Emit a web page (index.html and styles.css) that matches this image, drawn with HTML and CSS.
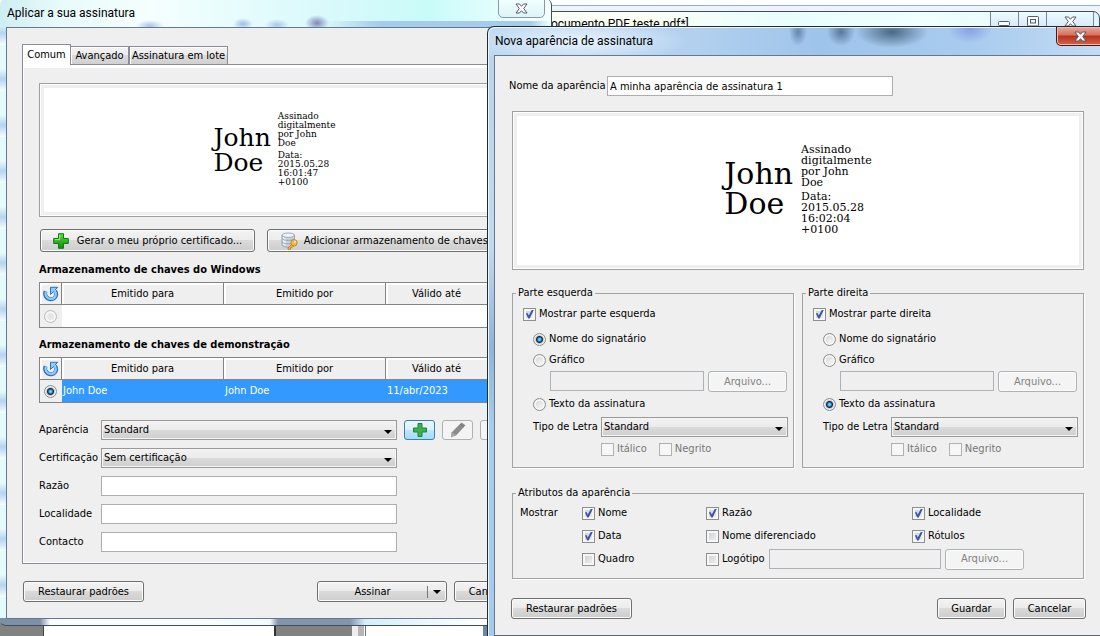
FILE: index.html
```html
<!DOCTYPE html>
<html lang="pt">
<head>
<meta charset="utf-8">
<title>Nova aparência de assinatura</title>
<link rel="stylesheet" href="styles.css">
</head>
<body>
<svg class="defs" aria-hidden="true">
  <defs>
    <linearGradient id="g-green" x1="0" y1="0" x2="0" y2="1"><stop offset="0" stop-color="#5fdc3a"/><stop offset="1" stop-color="#0c8a10"/></linearGradient>
  </defs>
  <symbol id="i-plus" viewBox="0 0 16 16"><path d="M5.5 .7h5v4.8h4.8v5h-4.8v4.8h-5v-4.8H.7v-5h4.8z" fill="url(#g-green)" stroke="#0b7d12" stroke-width="1"/><path d="M6.6 1.8v4.8H1.8" fill="none" stroke="#a5ef86" stroke-width=".9"/></symbol>
  <symbol id="i-plus-flat" viewBox="0 0 16 16"><path d="M6 1.500h4V6h4.500v4H10v4.500H6V10H1.500V6H6z" fill="#3cb24c" stroke="#23803a"/></symbol>
  <symbol id="i-refresh" viewBox="0 0 16 16"><path d="M2.600 5.200C1.200 8.500 3 12.800 7.200 13.200c5 .4 7.500-4.500 4.800-8.200" fill="none" stroke="#2b72c0" stroke-width="4"/><path d="M7.500 1.300h7.200L7.500 8.500z" fill="#8ecbf6" stroke="#2b72c0" stroke-linejoin="round"/><path d="M2.900 5.800C1.700 8.500 3.500 12.500 7.200 12.900c4.700.4 7-4 4.600-7.700L10.500 3.500" fill="none" stroke="#8ecbf6" stroke-width="2.200"/></symbol>
  <symbol id="i-store" viewBox="0 0 18 18"><path d="M2 3v9.500c0 1.700 2.800 2.700 6.200 2.700s6.300-1 6.300-2.700V3z" fill="#c8d3df" stroke="#8798ab" stroke-width=".8"/><path d="M3.500 5v8M5 5.500v8.300" stroke="#eef3f8" stroke-width="1.200"/><ellipse cx="8.250" cy="3.200" rx="6.200" ry="2.200" fill="#eff4f9" stroke="#8798ab" stroke-width=".8"/><path d="M2 6.500c1 2.500 11.500 2.500 12.500 0M2 10c1 2.500 11.500 2.500 12.500 0" fill="none" stroke="#8798ab" stroke-width=".8"/><path d="M11.900 12.100 8 16v1.300h2.500v-1.600h1.500l1.300-1.500z" fill="#f5b53c" stroke="#c07a14" stroke-width=".8"/><circle cx="14" cy="10.800" r="3.200" fill="#f7b944" stroke="#c07a14" stroke-width=".8"/><circle cx="15" cy="9.800" r="1" fill="#fff"/></symbol>
  <symbol id="i-pencil" viewBox="0 0 18 16"><path d="M12.500 .5 16.500 3.300 7.500 13 2 15.300l.8-5z" fill="#8b8b8b"/><path d="m2.800 10.300 4.700 2.700L2 15.300z" fill="#a5a5a5"/><path d="M11 2.200 15 5" stroke="#737373"/></symbol>
  <symbol id="i-close" viewBox="0 0 13 11"><path d="M1 1h3.500l2 2.300 2-2.300H12L8.700 5.500 12 10H8.500l-2-2.300-2 2.300H1l3.300-4.500z" fill="#fff" stroke="#555a6c" stroke-width="1"/></symbol>
</svg>

<div class="desktop">
  <section class="window app">
    <header class="app-title">
      <span class="app-name">Documento PDF teste.pdf*]</span>
      <div class="caption">
        <button type="button" class="cap" aria-label="Minimizar"><svg width="13" height="11" viewBox="0 0 13 11"><rect x=".5" y="5.500" width="11" height="4" rx="1" fill="#fff" stroke="#555a6c"/></svg></button>
        <button type="button" class="cap" aria-label="Maximizar"><svg width="12" height="11" viewBox="0 0 12 11"><rect x=".5" y=".5" width="11" height="9.500" rx="1" fill="#fff" stroke="#555a6c"/><rect x="3.500" y="3.500" width="5" height="3.500" fill="#dff" stroke="#555a6c"/></svg></button>
        <button type="button" class="cap cap-wide" aria-label="Fechar"><svg width="13" height="11"><use href="#i-close"/></svg></button>
      </div>
    </header>
    <div class="app-pages"></div>
  </section>

  <section class="window sign">
    <header class="sign-title">
      <h1 class="caption-text">Aplicar a sua assinatura</h1>
      <button type="button" class="sign-close" aria-label="Fechar"><svg width="13" height="11"><use href="#i-close"/></svg></button>
    </header>
    <div class="client sign-client">
      <div class="tabs" role="tablist">
        <button type="button" class="tab tab-on" role="tab" aria-selected="true">Comum</button>
        <button type="button" class="tab tab-mid" role="tab">Avançado</button>
        <button type="button" class="tab tab-last" role="tab">Assinatura em lote</button>
      </div>
      <div class="panel" role="tabpanel">
        <div class="preview preview-s">
          <p class="sig-name">John<br>Doe</p>
          <div class="sig-text"><p>Assinado<br>digitalmente<br>por John<br>Doe</p><p>Data:<br>2015.05.28<br>16:01:47<br>+0100</p></div>
        </div>
        <div class="cert-actions">
          <button type="button" class="btn btn-big btn-gen"><svg width="16" height="16"><use href="#i-plus"/></svg>Gerar o meu próprio certificado...</button>
          <button type="button" class="btn btn-big btn-store"><svg width="18" height="18"><use href="#i-store"/></svg>Adicionar armazenamento de chaves...</button>
        </div>
        <h2 class="store-title">Armazenamento de chaves do Windows</h2>
        <table class="keys">
          <colgroup><col class="c-pick"><col class="c-name"><col class="c-name"><col class="c-date"><col></colgroup>
          <thead><tr><th><svg width="16" height="16"><use href="#i-refresh"/></svg></th><th>Emitido para</th><th>Emitido por</th><th>Válido até</th><th></th></tr></thead>
          <tbody><tr><td class="pick"><input type="radio" name="cert-win" disabled aria-label="Certificado do Windows"></td><td></td><td></td><td></td><td></td></tr></tbody>
        </table>
        <h2 class="store-title">Armazenamento de chaves de demonstração</h2>
        <table class="keys">
          <colgroup><col class="c-pick"><col class="c-name"><col class="c-name"><col class="c-date"><col></colgroup>
          <thead><tr><th><svg width="16" height="16"><use href="#i-refresh"/></svg></th><th>Emitido para</th><th>Emitido por</th><th>Válido até</th><th></th></tr></thead>
          <tbody><tr class="chosen"><td class="pick"><input type="radio" name="cert-demo" checked aria-label="John Doe"></td><td>John Doe</td><td>John Doe</td><td>11/abr/2023</td><td></td></tr></tbody>
        </table>
        <div class="form">
          <label for="look">Aparência</label>
          <div class="look-row">
            <span class="pick-list"><select id="look"><option>Standard</option></select></span>
            <button type="button" class="icon-btn icon-btn-hot" aria-label="Adicionar"><svg width="16" height="16"><use href="#i-plus-flat"/></svg></button>
            <button type="button" class="icon-btn" aria-label="Editar" disabled><svg width="18" height="16"><use href="#i-pencil"/></svg></button>
            <button type="button" class="icon-btn" aria-label="Remover" disabled></button>
          </div>
          <label for="level">Certificação</label>
          <span class="pick-list"><select id="level"><option>Sem certificação</option></select></span>
          <label for="reason">Razão</label><input class="text" type="text" id="reason">
          <label for="place">Localidade</label><input class="text" type="text" id="place">
          <label for="contact">Contacto</label><input class="text" type="text" id="contact">
        </div>
      </div>
      <footer class="actions sign-actions">
        <button type="button" class="btn btn-reset">Restaurar padrões</button>
        <button type="button" class="btn btn-sign"><span>Assinar</span><i class="arrow"></i></button>
        <button type="button" class="btn btn-cancel">Cancelar</button>
      </footer>
    </div>
  </section>

  <section class="window look">
    <header class="look-title">
      <h1 class="caption-text">Nova aparência de assinatura</h1>
      <button type="button" class="look-close" aria-label="Fechar"><svg width="13" height="11"><use href="#i-close"/></svg></button>
    </header>
    <div class="client look-client">
      <div class="name-row">
        <label for="look-name">Nome da aparência</label>
        <input class="text" type="text" id="look-name" value="A minha aparência de assinatura 1">
      </div>
      <div class="preview preview-l">
        <p class="sig-name">John<br>Doe</p>
        <div class="sig-text"><p>Assinado<br>digitalmente<br>por John<br>Doe</p><p>Data:<br>2015.05.28<br>16:02:04<br>+0100</p></div>
      </div>
      <div class="halves">
        <fieldset class="group">
          <legend>Parte esquerda</legend>
          <div class="half">
            <label class="opt"><input type="checkbox" checked>Mostrar parte esquerda</label>
            <div class="half-body">
              <label class="opt"><input type="radio" name="left" checked>Nome do signatário</label>
              <label class="opt opt-file"><input type="radio" name="left">Gráfico</label>
              <div class="file-row"><input class="text" type="text" disabled aria-label="Gráfico"><button type="button" class="btn" disabled>Arquivo...</button></div>
              <label class="opt"><input type="radio" name="left">Texto da assinatura</label>
              <div class="font-row"><label for="font-l">Tipo de Letra</label><span class="pick-list"><select id="font-l"><option>Standard</option></select></span></div>
              <div class="style-row"><label class="opt off"><input type="checkbox" disabled>Itálico</label><label class="opt off"><input type="checkbox" disabled>Negrito</label></div>
            </div>
          </div>
        </fieldset>
        <fieldset class="group">
          <legend>Parte direita</legend>
          <div class="half">
            <label class="opt"><input type="checkbox" checked>Mostrar parte direita</label>
            <div class="half-body">
              <label class="opt"><input type="radio" name="right">Nome do signatário</label>
              <label class="opt opt-file"><input type="radio" name="right">Gráfico</label>
              <div class="file-row"><input class="text" type="text" disabled aria-label="Gráfico"><button type="button" class="btn" disabled>Arquivo...</button></div>
              <label class="opt"><input type="radio" name="right" checked>Texto da assinatura</label>
              <div class="font-row"><label for="font-r">Tipo de Letra</label><span class="pick-list"><select id="font-r"><option>Standard</option></select></span></div>
              <div class="style-row"><label class="opt off"><input type="checkbox" disabled>Itálico</label><label class="opt off"><input type="checkbox" disabled>Negrito</label></div>
            </div>
          </div>
        </fieldset>
      </div>
      <fieldset class="group attrs-group">
        <legend>Atributos da aparência</legend>
        <div class="attrs">
          <span class="attrs-label">Mostrar</span>
          <label class="opt"><input type="checkbox" checked>Nome</label>
          <label class="opt"><input type="checkbox" checked>Razão</label>
          <label class="opt"><input type="checkbox" checked>Localidade</label>
          <label class="opt"><input type="checkbox" checked>Data</label>
          <label class="opt"><input type="checkbox">Nome diferenciado</label>
          <label class="opt"><input type="checkbox" checked>Rótulos</label>
          <label class="opt"><input type="checkbox">Quadro</label>
          <div class="logo-row"><label class="opt"><input type="checkbox">Logótipo</label><input class="text" type="text" disabled aria-label="Logótipo"><button type="button" class="btn" disabled>Arquivo...</button></div>
        </div>
      </fieldset>
      <footer class="actions look-actions">
        <button type="button" class="btn btn-reset">Restaurar padrões</button>
        <button type="button" class="btn btn-save">Guardar</button>
        <button type="button" class="btn btn-cancel">Cancelar</button>
      </footer>
    </div>
  </section>
</div>
</body>
</html>
```
FILE: styles.css
```css
* { box-sizing: border-box; }
body { margin: 0; font: 11px/14px "DejaVu Sans Condensed", "DejaVu Sans", sans-serif; color: #000; }
h1, h2, p { margin: 0; font-weight: normal; }
button, input, select { font: inherit; color: inherit; margin: 0; padding: 0; }
button { display: flex; align-items: center; justify-content: center; white-space: nowrap; }
label, .opt { white-space: nowrap; }
.defs { position: absolute; width: 0; height: 0; }

.desktop { position: relative; min-height: 100vh; overflow: hidden; background: linear-gradient(#fdfeff 0 5px, #9aaac8 5px 6px, #edf3fb 6px); }
.window { position: absolute; display: flex; flex-direction: column; }

/* application behind the dialogs */
.app { top: 11px; left: 0; right: 0; bottom: 0; }
.app-title { display: flex; height: 30px; border: 1px solid #444c58; border-radius: 0 7px 0 0; background: linear-gradient(90deg, #f2fefe, #fbfff4 640px, #e9fdfd 780px, #f0ffff 930px, #dcf6fb); }
.app-name { font: 12px/25px Roboto, "Noto Sans", sans-serif; margin-left: 542px; }
.caption { display: flex; margin: 0 5px 0 auto; height: 20px; }
.cap { width: 28px; align-items: flex-start; padding-top: 4px; border: 0; border-left: 1px solid #7c8694; background: linear-gradient(#ecfbff, #cfe4f6); }
.cap-wide { width: 48px; border-right: 1px solid #7c8694; }
.app-pages { flex: 1; background: linear-gradient(90deg, #828282 0 43px, #444 43px 44px, #fff 44px 274px, #333 274px 276px, #828282 276px 352px, #eee 352px 358px, #b5b5b5 358px 364px, #fff 364px 365px, #53789a 365px 366px, #fff 366px 483px, #6a87a5 483px); }

/* shared parts */
.client { flex: 1; display: flex; flex-direction: column; background: #efefef; border: 1px solid #66788a; }
.caption-text { font: 12px/16px Roboto, "Noto Sans", sans-serif; }
.btn { height: 21px; border: 1px solid #707070; border-radius: 3px; background: linear-gradient(#f3f3f3, #ebebeb 50%, #dadada 50%, #cdcdcd); box-shadow: inset 0 0 0 1px #fbfbfb; }
.btn:disabled { background: #f4f4f4; border-color: #adb2b5; color: #838383; }
.text { height: 20px; padding: 0 2px; border: 1px solid #abadb3; background: #fff; min-width: 0; }
.text:disabled { background: #efefef; border-color: #afb0b8; }
.pick-list { position: relative; display: flex; height: 20px; }
.pick-list select { appearance: none; flex: 1; padding: 0 2px; border: 1px solid #999; border-radius: 0; background: linear-gradient(#f2f2f2, #ebebeb 50%, #dadada 50%, #cfcfcf); box-shadow: inset 0 0 0 1px #f5f5f5; }
.pick-list::after { content: ""; position: absolute; right: 5px; top: 10px; border: 4px solid transparent; border-top-color: #000; border-bottom: 0; pointer-events: none; }
.opt { display: flex; align-items: center; gap: 3px; height: 14px; }
.off { color: #777; }
input[type="checkbox"], input[type="radio"] { appearance: none; flex: none; display: block; width: 13px; height: 13px; border: 1px solid #8e8f8f; box-shadow: inset 0 0 0 2px #f6f6f6; background: linear-gradient(135deg, #c8ccd2, #f4f4f4); }
input[type="checkbox"]:checked::before { content: ""; display: block; width: 9px; height: 9px; margin: 1px; background: #3c55a5; clip-path: polygon(10% 45%, 28% 40%, 42% 66%, 78% 0, 100% 0, 52% 100%, 36% 100%); }
input[type="checkbox"]:disabled { background: #f7f7f7; border-color: #b1b1b1; }
input[type="radio"] { border-radius: 50%; background: radial-gradient(circle at 60% 65%, #f4f4f4, #c6c6c6); }
input[type="radio"]:checked { background: radial-gradient(circle at 50% 50%, #6cc8ee 0 1px, #1b78ad 2px, #12283f 3px, #c9ced3 4px); box-shadow: inset 0 0 0 1px #f4f4f4; }
input[type="radio"]:disabled { background: #e6e6e6; border-color: #bcbcbc; }
.preview { display: flex; align-items: center; justify-content: center; border: 1px solid #a0a0a0; box-shadow: inset 0 0 0 1px #fff, inset 0 0 0 4px #efefef; background: #fff; font-family: "DejaVu Serif", serif; }
.sig-text { display: grid; gap: 3px; }
.actions { display: flex; }
.btn-reset { width: 121px; margin-right: auto; }
.btn-cancel { width: 73px; margin-left: 7px; }
.group { min-width: 0; margin: 0; padding: 0; border: 1px solid #a3a3a3; box-shadow: 1px 1px 0 #fff; }
.group legend { margin-left: 3px; padding: 0 2px; height: 14px; }

/* "Aplicar a sua assinatura" */
.sign { top: -1px; left: 0; width: 552px; bottom: 10px; padding: 0 7px 6px 6px; border-right: 1px solid #444c58; border-bottom: 1px solid #444c58; border-radius: 6px;
  background:
    linear-gradient(90deg, #7d91a6 0 40px, #fafdff 50px 180px, #f4fbfd 270px, #8195ab 278px 350px, #d3effa 365px, #fff 480px) 0 100% / 100% 7px no-repeat,
    radial-gradient(ellipse 12px 8px at 317px 24px, #7f86b9, transparent),
    radial-gradient(ellipse 14px 6px at 150px 27px, #a9c1ea, transparent),
    radial-gradient(ellipse 10px 6px at 243px 25px, #9dbbe8, transparent),
    radial-gradient(ellipse 12px 6px at 277px 26px, #a9c5ee, transparent),
    linear-gradient(90deg, transparent 325px, #a5ccec 380px 530px, transparent) 0 22px / 100% 7px no-repeat,
    linear-gradient(90deg, #cfeef2 0, #e8fafa 60px, #f4fffe 150px, #d9f9fb 330px, #c9fbf9 430px, #f3ffff 540px) 0 0 / 100% 28px no-repeat,
    repeating-linear-gradient(#e4fafc 0 24px, #b4d4f0 34px, #f4ffff 46px); }
.sign-title { display: flex; align-items: flex-start; justify-content: space-between; height: 28px; padding: 0; }
.sign-title .caption-text { padding: 6px 0 0 1px; }
.sign-close { width: 47px; height: 19px; margin-right: -1px; border: 1px solid #8b98a4; border-radius: 0 0 5px 5px; background: linear-gradient(#f0ffff, #dff4f6); }
.sign-client { padding: 16px 16px 16px 15px; }
.tabs { display: flex; align-items: flex-end; height: 20px; }
.tab { height: 18px; border: 1px solid #8a8c96; border-width: 1px 1px 0 0; background: linear-gradient(#f3f3f3, #ebebeb 50%, #dcdcdc 50%, #d0d0d0); box-shadow: inset 1px 1px 0 #fff; }
.tab-mid { width: 58px; }
.tab-last { width: 99px; border-left-width: 1px; }
.tab-on { position: relative; z-index: 1; width: 49px; height: 21px; margin-bottom: -1px; border-left-width: 1px; background: #fff; }
.panel { flex: 1; padding: 18px 16px 10px; border: 1px solid #8a8c96; box-shadow: inset 1px -1px 0 #fff, inset 0 3px 0 #fff; }
.preview-s { height: 134px; gap: 7px; padding-bottom: 1px; }
.preview-s .sig-name { font-size: 25px; line-height: 25px; }
.preview-s .sig-text { font-size: 9px; line-height: 9px; }
.cert-actions { display: flex; gap: 12px; margin: 12px 0 10px; padding-left: 1px; }
.btn-big { height: 23px; gap: 8px; }
.btn-gen { width: 215px; }
.btn-store { flex: 1; gap: 6px; }
.store-title { font-size: 11px; font-weight: bold; line-height: 16px; margin-bottom: 4px; }
.keys { width: 100%; table-layout: fixed; border-collapse: separate; border-spacing: 0; border: 1px solid #848484; margin-bottom: 9px; background: #fff; }
.c-pick { width: 22px; }
.c-name { width: 162px; }
.c-date { width: 102px; }
.keys th, .keys td { height: 22px; padding: 0 1px; font-weight: normal; text-align: left; }
.keys th { text-align: center; background: #efefef; border-right: 1px solid #848484; border-bottom: 1px solid #848484; box-shadow: inset 2px 2px 0 #fff; }
.keys th svg { display: block; margin: 0 auto; }
.keys .pick { background: #efefef; }
.keys .pick input { margin: 0 3px; }
.chosen td { background: #3399ff; color: #fff; }
.form { display: grid; grid-template-columns: 62px 296px; gap: 8px 0; align-items: center; margin-top: 17px; }
.look-row { display: flex; gap: 7px; height: 20px; }
.look-row .pick-list { flex: none; width: 296px; }
.icon-btn { flex: none; width: 31px; height: 20px; border: 1px solid #adb2b5; border-radius: 3px; background: #f4f4f4; }
.icon-btn-hot { border-color: #3c7fb1; background: linear-gradient(#eaf6fd, #d9f0fc 50%, #bee6fd 50%, #a7d9f5); }
.sign-actions { margin-top: 17px; padding-left: 1px; }
.btn-sign { width: 130px; }
.btn-sign span { flex: 1; }
.arrow { width: 19px; height: 12px; display: flex; align-items: center; justify-content: center; border-left: 1px solid #777; }
.arrow::after { content: ""; border: 4px solid transparent; border-top-color: #000; border-bottom: 0; }

/* "Nova aparência de assinatura" */
.look { top: 26px; left: 487px; right: -10px; bottom: 0; padding: 0 7px 0 6px; border: 1px solid #1f2d3b; border-bottom: 0; border-radius: 7px 0 0 0; box-shadow: inset 1px 1px 0 #eef7ff;
  background:
    radial-gradient(ellipse 36px 16px at 404px 5px, #4a6884, transparent),
    radial-gradient(ellipse 14px 14px at 353px 5px, #58789a, transparent),
    radial-gradient(ellipse 9px 14px at 310px 5px, #6286ae, transparent),
    radial-gradient(ellipse 22px 14px at 482px 2px, #87a0e4, transparent),
    radial-gradient(ellipse 110px 22px at 90px 14px, #e9f3fd, transparent),
    linear-gradient(90deg, #bcd8f0, #b3d1ef 200px, #9fc4ea 330px, #a8cbee 480px, #c3dcf3) 0 0 / 100% 29px no-repeat,
    linear-gradient(#b7d3ee, #c0daf2 220px, #90b3d7 320px, #a9cdee 400px, #a5caec); }
.look-title { display: flex; align-items: flex-start; justify-content: space-between; height: 28px; }
.look-title .caption-text { padding: 6px 0 0 1px; }
.look-close { width: 49px; height: 19px; margin-right: -3px; border: 1px solid #4b1512; border-top: 0; border-radius: 0 0 5px 5px; background: linear-gradient(#e9a99b, #d4705d 45%, #b8301b 50%, #d0644a); box-shadow: inset 0 0 0 1px #eebbb0; }
.look-client { padding: 20px 17px 16px; border-bottom-color: #56697c; }
.name-row { display: flex; align-items: center; margin-left: -3px; }
.name-row label { width: 98px; }
.name-row .text { width: 286px; }
.look-client .preview { height: 159px; margin-top: 15px; }
.preview-l { gap: 8px; padding-bottom: 3px; }
.preview-l .sig-name { font-size: 30px; line-height: 30px; }
.preview-l .sig-text { font-size: 11px; line-height: 11px; }
.halves { display: grid; grid-template-columns: 1fr 1fr; gap: 8px; margin-top: 16px; }
.half { padding: 7px 5px 11px 10px; }
.half-body { display: grid; padding-left: 10px; margin-top: 11px; }
.opt-file { margin: 7px 0 4px; }
.file-row { display: flex; gap: 4px; margin: 0 1px 5px 17px; }
.file-row .text { flex: 1; }
.file-row .btn, .logo-row .btn { width: 79px; }
.font-row { display: flex; align-items: center; margin-top: 6px; }
.font-row label { width: 68px; }
.font-row .pick-list { flex: 1; }
.style-row { display: flex; gap: 12px; margin: 5px 0 0 68px; }
.attrs-group { margin-top: 18px; }
.attrs { display: grid; grid-template-columns: 62px 124px 206px 1fr; grid-auto-rows: 20px; row-gap: 3px; align-items: center; padding: 3px 7px 9px; }
.attrs-label { grid-row: span 3; align-self: start; line-height: 20px; }
.logo-row { grid-column: span 2; display: flex; align-items: center; }
.logo-row .opt { width: 63px; }
.logo-row .text { width: 172px; margin-right: 4px; }
.look-actions { margin: 19px -2px 0 -1px; }
.btn-save { width: 69px; }
.look-actions .btn-cancel { margin-left: 7px; }
```
